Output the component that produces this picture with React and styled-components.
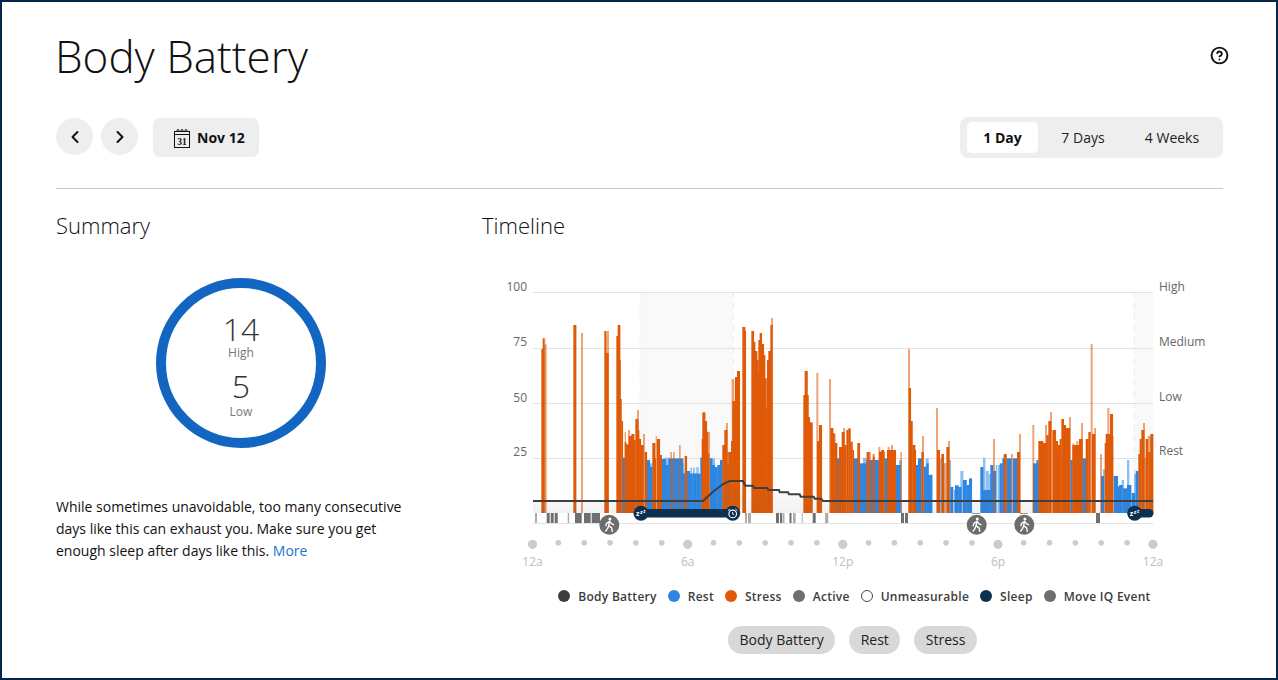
import React from "react";
import styled, { createGlobalStyle } from "styled-components";
import { ChevronLeft, ChevronRight, CircleHelp } from "lucide-react";

const GlobalStyle = createGlobalStyle`
  html, body { margin: 0; padding: 0; background: #fff; }
  body { font-family: "Open Sans", "Liberation Sans", sans-serif; color: #111; }
`;

const Frame = styled.div`
  box-sizing: border-box;
  width: 1278px;
  height: 680px;
  border: 2px solid #06264a;
  padding: 25px 53px 0 54px;
  overflow: hidden;
`;

const Header = styled.header`
  display: flex;
  justify-content: space-between;
  align-items: center;
  height: 60px;
  color: #111;
  svg { margin-top: -4px; margin-right: -6px; }
`;

const Title = styled.h1`
  margin: -1px 0 1px -1px;
  font-size: 44px;
  line-height: 60px;
  font-weight: 300;
`;

const Toolbar = styled.div`
  display: flex;
  align-items: flex-start;
  margin-top: 30px;
  height: 41px;
  padding-bottom: 30px;
  border-bottom: 1px solid #c8c8c8;
`;

const RoundButton = styled.button`
  display: flex;
  align-items: center;
  justify-content: center;
  width: 37px;
  height: 37px;
  margin: 1px 8px 0 0;
  padding: 0;
  border: 0;
  border-radius: 50%;
  background: #eeeeee;
  color: #111;
`;

const DateButton = styled.button`
  display: flex;
  align-items: center;
  gap: 6px;
  height: 39px;
  margin: 1px 0 0 7px;
  padding: 0 14px 0 20px;
  border: 0;
  border-radius: 7px;
  background: #eeeeee;
  color: #111;
  font: 700 14px "Open Sans", sans-serif;
`;

const Segments = styled.div`
  display: flex;
  margin-left: auto;
  width: 263px;
  box-sizing: border-box;
  height: 41px;
  padding: 5px 7px 5px 7px;
  border-radius: 8px;
  background: #eeeeee;
`;

const Segment = styled.div`
  display: flex;
  align-items: center;
  justify-content: center;
  width: ${(props) => props.$width}px;
  border-radius: 5px;
  background: ${(props) => (props.$active ? "#ffffff" : "transparent")};
  font-size: 14px;
  font-weight: ${(props) => (props.$active ? 700 : 400)};
  color: ${(props) => (props.$active ? "#111" : "#222")};
`;

const Columns = styled.div`
  display: grid;
  grid-template-columns: 426px 741px;
  margin-top: 21px;
`;

const SectionTitle = styled.h2`
  margin: 0;
  font-size: 22px;
  line-height: 30px;
  font-weight: 300;
  color: #111;
`;

const Summary = styled.section`
  width: 370px;
`;

const Ring = styled.div`
  box-sizing: border-box;
  display: flex;
  flex-direction: column;
  align-items: center;
  width: 170px;
  height: 170px;
  margin: 38px auto 0;
  padding-top: 24px;
  border: 10px solid #1266c2;
  border-radius: 50%;
`;

const RingValue = styled.div`
  font-size: 32px;
  line-height: 34px;
  font-weight: 300;
  color: #333;
`;

const RingLabel = styled.div`
  font-size: 12px;
  line-height: 14px;
  margin-top: ${(props) => props.$offset || 0}px;
  margin-bottom: 9px;
  color: #777;
`;

const Blurb = styled.p`
  margin: 48px 0 0;
  font-size: 14px;
  line-height: 22px;
  color: #111;
`;

const More = styled.a`
  color: #1a73d0;
`;

const Timeline = styled.section`
  display: flex;
  flex-direction: column;
`;

const ChartSvg = styled.svg`
  display: block;
  width: 741px;
  height: 310px;
  margin-top: 30px;
  font-family: "Open Sans", sans-serif;
`;

const Legend = styled.div`
  display: flex;
  justify-content: center;
  gap: 11px;
  margin-top: 6px;
  padding-left: 4px;
  height: 20px;
  align-items: center;
`;

const LegendItem = styled.div`
  display: flex;
  align-items: center;
  gap: 8px;
  font-size: 12px;
  font-weight: 600;
  letter-spacing: 0.27px;
  color: #3c3c3c;
`;

const Dot = styled.span`
  box-sizing: border-box;
  width: 12px;
  height: 12px;
  border-radius: 50%;
  background: ${(props) => props.$color};
  border: ${(props) => (props.$hollow ? "1px solid #444" : "0")};
`;

const Pills = styled.div`
  display: flex;
  justify-content: center;
  gap: 14px;
  margin-top: 20px;
`;

const Pill = styled.div`
  height: 28px;
  line-height: 28px;
  padding: 0 11.5px;
  border-radius: 14px;
  background: #d8d8d8;
  font-size: 14px;
  color: #222;
`;

const COLORS = {
  o: "#df5a08",
  l: "#df5a08",
  b: "#2e86e3",
  c: "#8fbff0",
};

// x0 x1 top kind, read off the chart at 3x from two origins
const LEFT_BARS = `25 29 102 o,29 33 70 o,33 37 70 l,33 41 88 l,121 129 30 o,144 150 54 l,214 218 48 o,218 228 48 l,218 226 114 o,
250 254 63 o,254 261 30 o,257 262 135 o,261 265 252 o,265 269 318 o,268 275 428 b,275 279 351 l,275 279 381 o,279 287 388 o,285 291 345 l,
287 297 363 o,295 303 357 o,303 307 375 o,307 315 312 o,312 318 285 l,312 318 345 o,318 323 372 o,323 331 390 o,330 336 357 l,335 341 411 o,
340 350 435 b,350 358 456 b,346 358 445 c,358 366 384 o,362 368 430 o,368 372 364 l,372 380 372 o,380 386 420 o,386 398 432 b,398 406 450 b,392 410 428 c,
406 450 430 b,412 417 411 l,420 425 411 l,438 443 390 l,444 450 445 b,450 456 475 b,455 461 423 o,461 470 468 b,470 478 476 b,472 476 458 c,478 490 475 b,480 484 458 c,490 502 476 b,490 496 456 c,
502 506 428 b,506 510 372 o,508 516 292 o,515 521 318 o,519 524 350 o,520 528 415 o,525 531 351 l,530 537 430 b,537 545 450 b,532 545 430 c,545 553 456 b,553 561 450 b,
561 568 435 b,557 563 477 c,568 576 390 o,574 582 345 o,579 585 324 l,582 588 450 b,582 588 411 l,586 594 411 o,594 598 378 o,598 602 258 o,596 604 192 l,602 610 258 o,
606 614 186 o,612 620 168 o,628 636 36 o,632 638 48 o,655 662 48 o,658 666 81 o,662 672 108 o,668 674 135 o,672 678 135 l,672 678 175 o,676 684 75 o,680 686 54 o,
684 692 87 o,688 696 120 o,692 700 190 o,698 706 280 l,700 706 280 o,702 710 135 o,706 714 108 o,712 718 30 o,714 720 9 l,
811 815 240 o,815 823 168 o,820 826 240 o,825 830 306 o,830 838 322 o,850 856 174 l,852 858 378 o,858 866 330 o,888 894 192 l,892 900 339 o,900 904 354 o,
900 908 357 l,904 912 384 o,912 920 430 b,912 918 450 l,918 926 396 o,926 930 351 o`;

const RIGHT_BARS = `0 4 351 o,0 6 339 l,4 8 390 o,8 12 390 l,10 16 345 o,16 22 340 o,22 28 380 o,28 32 405 o,32 46 430 b,42 50 384 l,44 50 384 o,50 60 445 b,60 70 445 b,
60 70 428 c,70 84 435 b,70 84 411 l,72 78 411 o,84 110 435 b,88 96 417 l,90 94 425 o,108 124 410 o,106 112 396 l,115 122 405 o,124 132 430 b,132 158 405 o,134 140 396 l,144 150 390 l,
158 172 450 b,172 177 411 l,168 175 435 c,195 201 102 l,197 203 219 o,200 208 318 o,208 216 390 o,212 218 405 o,218 225 450 b,225 235 430 b,235 241 411 o,237 243 363 l,243 250 455 b,
250 256 445 b,248 256 430 c,255 266 480 b,262 268 478 c,279 285 279 l,282 290 405 o,290 296 430 c,295 302 417 o,296 304 445 c,304 310 444 l,310 318 396 o,315 321 378 l,318 323 435 c,322 330 516 b,
334 342 525 b,336 346 511 b,346 355 516 b,352 360 468 c,360 370 495 b,370 378 510 b,378 386 490 b,412 420 456 b,420 426 428 c,420 432 525 b,428 436 468 c,432 442 525 b,436 444 477 c,442 450 450 b,
450 456 372 l,450 458 468 b,458 461 450 c,464 470 450 c,470 478 445 b,478 482 430 b,482 490 417 o,490 505 430 b,504 510 417 l,510 522 430 b,522 530 411 o,528 534 357 l,568 574 330 l,570 586 445 b,
580 586 435 b,586 600 378 o,596 604 390 l,600 610 384 o,606 612 330 l,610 616 360 o,616 624 318 o,621 627 291 l,628 638 345 o,638 644 378 o,640 646 430 l,644 652 390 o,650 655 372 o,655 662 312 o,
660 668 330 o,664 672 340 l,668 680 339 o,678 684 306 l,682 688 435 b,688 694 385 l,688 712 390 o,700 706 378 l,708 718 372 o,714 720 324 l,718 728 430 b,728 736 372 o,736 742 351 o,743 749 87 l,
747 756 357 o,753 759 339 l,771 777 417 l,774 782 483 b,780 786 462 c,785 790 384 o,788 796 357 o,793 799 279 l,796 808 357 o,801 809 297 o,808 812 363 l,812 824 483 b,824 830 515 b,828 838 510 b,
836 842 495 c,840 852 520 b,852 864 510 b,852 858 435 c,866 876 534 b,873 880 477 c,878 886 468 b,886 892 417 o,890 895 372 o,895 903 345 o,900 906 324 l,903 910 428 l,908 914 372 o,914 924 363 l,916 922 411 o,922 930 357 o`;

const parseBars = (text, originX) =>
  text
    .split(",")
    .map((row) => row.trim().split(" "))
    .map(([x0, x1, top, kind]) => ({
      x: originX + Number(x0) / 3,
      w: (Number(x1) - Number(x0)) / 3,
      y: 315 + Number(top) / 3,
      kind,
    }));

const bars = [...parseBars(LEFT_BARS, 533), ...parseBars(RIGHT_BARS, 843)];
const barOrder = ["c", "b", "o", "l"];

const LINE =
  "M533 501 L703 501 L713 491.7 L723 484 L729.7 481 L743 481 L745.3 485.7 L753 485.7 L754 488 L767.3 488 L768.3 490 L779 490 L779.7 492.3 L788 492.3 L789 494.3 L799.7 494.3 L800.7 496.7 L813.7 496.7 L814.7 498.7 L821.3 498.7 L823 501 L1153 501";

// activity strip: x, width, dark or pale
const ACTIVITY = [
  [535, 2, 1], [546.7, 3, 0], [550.7, 3, 0], [554.7, 3, 0], [567.7, 1.5, 1], [575, 6.7, 0], [584, 6.7, 0], [591.7, 8.3, 0],
  [745, 2, 1], [748, 3, 1], [776, 3, 0], [780, 2, 0], [782.5, 2, 1], [789.5, 2, 0], [793, 2.7, 1], [801.7, 1, 1], [812.7, 3, 0], [825, 3.3, 1],
  [901, 3, 0], [905, 3, 0], [1096, 4, 0],
];

const GRID_Y = [292, 348, 403, 458];
const LEFT_TICKS = [["100", 291], ["75", 346], ["50", 402], ["25", 456]];
const RIGHT_TICKS = [["High", 291], ["Medium", 346], ["Low", 401], ["Rest", 455]];
const HOURS = [["12a", 532.5], ["6a", 687.7], ["12p", 842.8], ["6p", 998], ["12a", 1153]];

const WalkIcon = ({ x }) => (
  <g transform={`translate(${x} 524.7)`}>
    <circle r="10" fill="#6c6c6c" />
    <circle cx="0.6" cy="-5.6" r="1.5" fill="#fff" />
    <path
      d="M0.2 -3.4 L-0.6 1 L2.4 3.2 L3 6.6 M-0.6 1 L-1.6 3.6 L-3.6 6.4 M0.2 -3.2 L-2.8 -1.4 L-3.4 1 M0.4 -3.2 L2.4 -0.8 L4.2 0"
      fill="none"
      stroke="#fff"
      strokeWidth="1.4"
      strokeLinecap="round"
      strokeLinejoin="round"
    />
  </g>
);

const SleepBadge = ({ x }) => (
  <g transform={`translate(${x} 513.3)`}>
    <circle r="7.5" fill="#0d3050" />
    <text x="-5" y="3" fontSize="7" fontWeight="700" fill="#fff">z</text>
    <text x="-1" y="1" fontSize="5.5" fontWeight="700" fill="#fff">z</text>
    <text x="2.2" y="0" fontSize="4.5" fontWeight="700" fill="#fff">z</text>
  </g>
);

const AlarmBadge = ({ x }) => (
  <g transform={`translate(${x} 513.3)`}>
    <circle r="7.5" fill="#0d3050" />
    <circle cy="0.6" r="3.8" fill="none" stroke="#fff" strokeWidth="1.1" />
    <path d="M0 -1.2 V0.8 L1.3 1.6 M-4.6 -2.6 L-2.8 -4.3 M4.6 -2.6 L2.8 -4.3" fill="none" stroke="#fff" strokeWidth="1" />
  </g>
);

const Chart = () => (
  <ChartSvg viewBox="482 270 741 310">
    <defs>
      <linearGradient id="batteryFill" x1="0" y1="481" x2="0" y2="513" gradientUnits="userSpaceOnUse">
        <stop offset="0" stopColor="#555" stopOpacity="0" />
        <stop offset="1" stopColor="#555" stopOpacity="0.08" />
      </linearGradient>
    </defs>

    <rect x="640" y="292" width="93" height="221" fill="#f9f9f9" />
    <rect x="1134" y="292" width="19" height="221" fill="#f9f9f9" />
    <line x1="733.5" y1="292" x2="733.5" y2="513" stroke="#ececec" strokeDasharray="6 5" />
    <line x1="640" y1="292" x2="640" y2="513" stroke="#f1f1f1" strokeDasharray="6 5" />
    <line x1="1134" y1="292" x2="1134" y2="513" stroke="#ececec" strokeDasharray="6 5" />

    {GRID_Y.map((y) => (
      <line key={y} x1="533" x2="1153" y1={y + 0.5} y2={y + 0.5} stroke="#e2e2e2" />
    ))}
    <line x1="533" x2="1153" y1="523.5" y2="523.5" stroke="#e2e2e2" />

    {LEFT_TICKS.map(([label, y]) => (
      <text key={label} x="527" y={y} textAnchor="end" fontSize="12" fill="#666">{label}</text>
    ))}
    {RIGHT_TICKS.map(([label, y]) => (
      <text key={label} x="1159" y={y} fontSize="12" fill="#666">{label}</text>
    ))}

    {barOrder.map((kind) =>
      bars
        .filter((bar) => bar.kind === kind)
        .map((bar, i) => (
          <rect
            key={kind + i}
            x={bar.x}
            y={bar.y}
            width={kind === "l" ? bar.w : bar.w + 0.4}
            height={513 - bar.y}
            fill={COLORS[kind]}
            fillOpacity={kind === "l" ? 0.55 : 1}
          />
        ))
    )}

    <path d={`${LINE} L1153 513 L533 513 Z`} fill="url(#batteryFill)" />
    <path d={LINE} fill="none" stroke="#3f3f3f" strokeWidth="2" />

    {ACTIVITY.map(([x, w, pale]) => (
      <rect key={x} x={x} y="513" width={w} height="10" fill={pale ? "#adadad" : "#6f6f6f"} />
    ))}
    <rect x="972" y="513" width="8" height="1" fill="#999" />
    <rect x="1020" y="513" width="8" height="1" fill="#999" />

    <rect x="641" y="509" width="92" height="8.5" fill="#0d3050" />
    <rect x="1135" y="509" width="18.5" height="8.5" rx="4.2" fill="#0d3050" />
    <SleepBadge x={641} />
    <AlarmBadge x={732.7} />
    <SleepBadge x={1134.7} />

    <WalkIcon x={609.3} />
    <WalkIcon x={976.7} />
    <WalkIcon x={1024.3} />

    {Array.from({ length: 25 }, (_, i) => i)
      .filter((i) => i % 6 !== 0)
      .map((i) => (
        <circle key={i} cx={532.5 + i * 25.85} cy="542.7" r="2.8" fill="#cccccc" />
      ))}
    {HOURS.map(([label, x]) => (
      <g key={x}>
        <circle cx={x} cy="544.3" r="4.6" fill="#cccccc" />
        <text x={x} y="566" textAnchor="middle" fontSize="12" fill="#bdbdbd">{label}</text>
      </g>
    ))}
  </ChartSvg>
);

const CalendarIcon = () => (
  <svg width="18" height="20" viewBox="0 0 18 20">
    <rect x="1.5" y="3.5" width="15" height="16" fill="none" stroke="#111" />
    <path d="M1.5 6.5 H16.5" stroke="#111" />
    <path d="M4 4 V2.5 A1 1 0 0 1 6 2.5 V4 M8 4 V2.5 A1 1 0 0 1 10 2.5 V4 M12 4 V2.5 A1 1 0 0 1 14 2.5 V4" fill="none" stroke="#111" />
    <text x="9" y="16.5" textAnchor="middle" fontSize="9.5" fontWeight="600" fontFamily="'Liberation Serif', serif" fill="#111">31</text>
  </svg>
);

const LEGEND = [
  ["Body Battery", "#3f3f3f"],
  ["Rest", "#2e86e3"],
  ["Stress", "#df5a08"],
  ["Active", "#6f6f6f"],
  ["Unmeasurable", "#fff", true],
  ["Sleep", "#0d3050"],
  ["Move IQ Event", "#6f6f6f"],
];

export default function App() {
  return (
    <Frame>
      <GlobalStyle />
      <Header>
        <Title>Body Battery</Title>
        <CircleHelp size={19} strokeWidth={2.4} />
      </Header>
      <Toolbar>
        <RoundButton><ChevronLeft size={20} strokeWidth={2.4} /></RoundButton>
        <RoundButton><ChevronRight size={20} strokeWidth={2.4} /></RoundButton>
        <DateButton><CalendarIcon />Nov 12</DateButton>
        <Segments>
          <Segment $width={71} $active>1 Day</Segment>
          <Segment $width={90}>7 Days</Segment>
          <Segment $width={88}>4 Weeks</Segment>
        </Segments>
      </Toolbar>
      <Columns>
        <Summary>
          <SectionTitle>Summary</SectionTitle>
          <Ring>
            <RingValue>14</RingValue>
            <RingLabel>High</RingLabel>
            <RingValue>5</RingValue>
            <RingLabel $offset={2}>Low</RingLabel>
          </Ring>
          <Blurb>
            While sometimes unavoidable, too many consecutive days like this can exhaust you. Make sure you get enough sleep after days like this. <More>More</More>
          </Blurb>
        </Summary>
        <Timeline>
          <SectionTitle>Timeline</SectionTitle>
          <Chart />
          <Legend>
            {LEGEND.map(([label, color, hollow]) => (
              <LegendItem key={label}>
                <Dot $color={color} $hollow={hollow} />
                {label}
              </LegendItem>
            ))}
          </Legend>
          <Pills>
            <Pill>Body Battery</Pill>
            <Pill>Rest</Pill>
            <Pill>Stress</Pill>
          </Pills>
        </Timeline>
      </Columns>
    </Frame>
  );
}
